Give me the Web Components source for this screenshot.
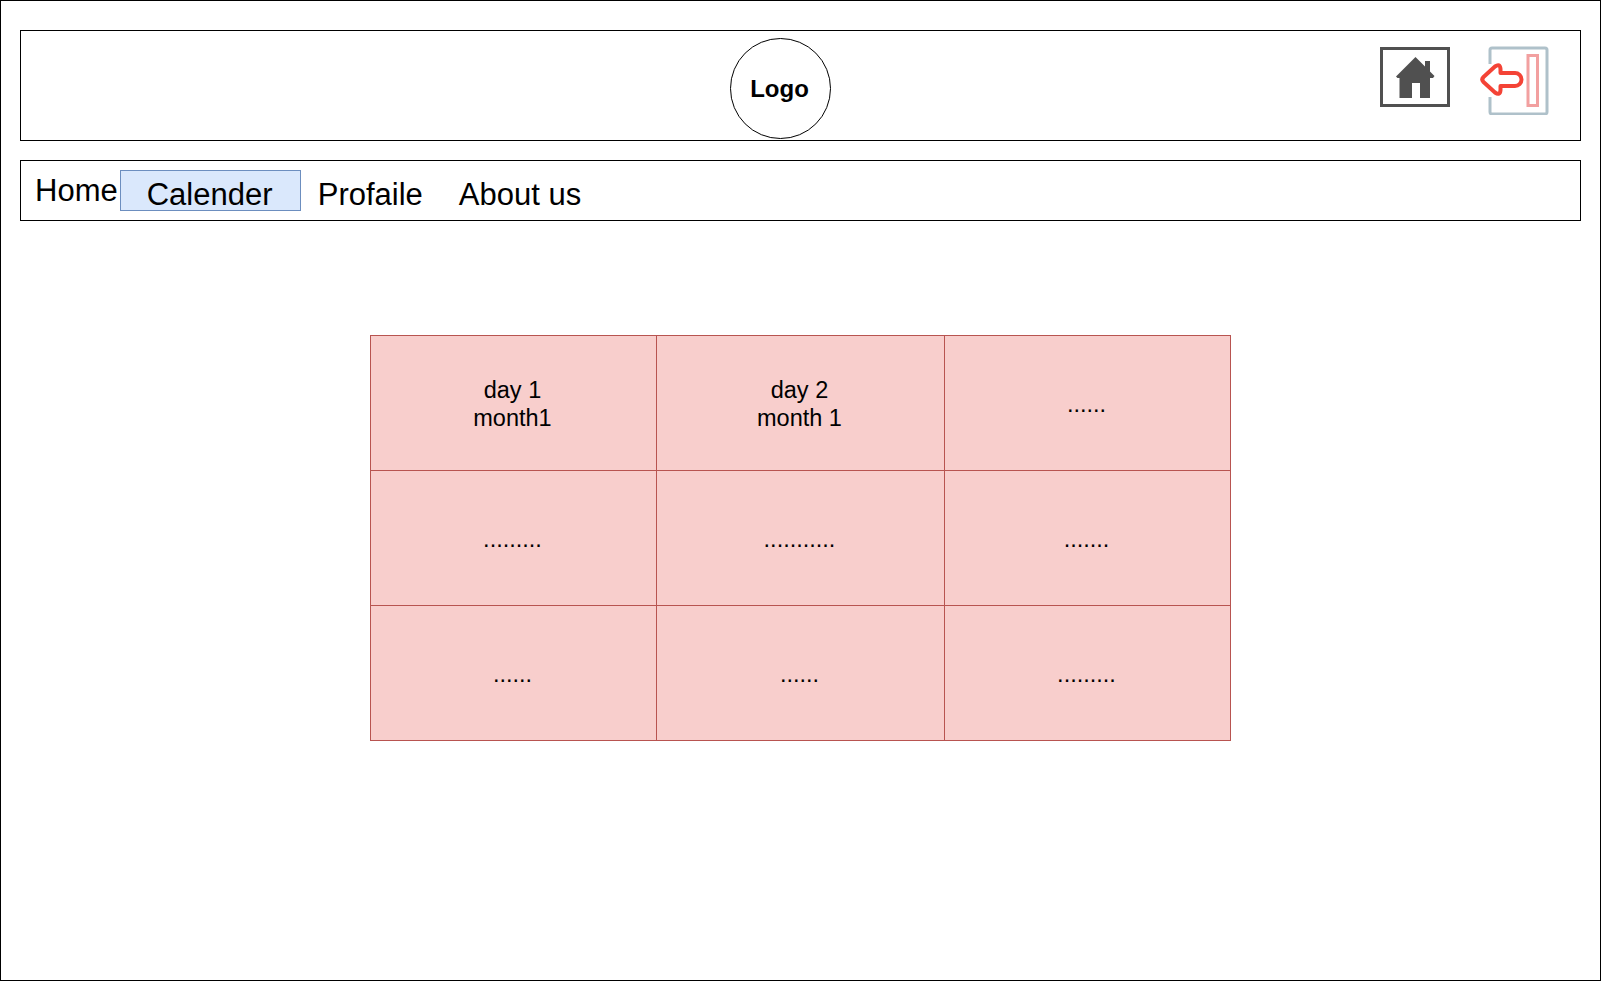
<!DOCTYPE html>
<html>
<head>
<meta charset="utf-8">
<title>Calender</title>
<style>
  html, body { margin: 0; padding: 0; background: #fff; }
</style>
</head>
<body>
<wire-page>
  <wire-header>
    <wire-logo>Logo</wire-logo>
    <home-icon slot="actions"></home-icon>
    <exit-icon slot="actions"></exit-icon>
  </wire-header>
  <wire-nav>
    <nav-item class="first">Home</nav-item>
    <nav-item active>Calender</nav-item>
    <nav-item>Profaile</nav-item>
    <nav-item>About us</nav-item>
  </wire-nav>
  <day-grid>
    <day-cell>day 1<br>month1</day-cell>
    <day-cell>day 2<br>month 1</day-cell>
    <day-cell>......</day-cell>
    <day-cell>.........</day-cell>
    <day-cell>...........</day-cell>
    <day-cell>.......</day-cell>
    <day-cell>......</day-cell>
    <day-cell>......</day-cell>
    <day-cell>.........</day-cell>
  </day-grid>
</wire-page>
<script>
// small helper, every element is just a template + open shadow root
function makeElement(name, html) {
  const template = document.createElement('template');
  template.innerHTML = html;
  customElements.define(name, class extends HTMLElement {
    constructor() {
      super();
      this.attachShadow({ mode: 'open' });
      this.shadowRoot.appendChild(template.content.cloneNode(true));
    }
  });
}

// PAGE
makeElement('wire-page', `
  <style>
    :host {
      display: flex;
      flex-direction: column;
      box-sizing: border-box;
      width: 1601px;
      height: 981px;
      padding: 29px 19px 0 19px;
      border: 1px solid #000;
      background: #fff;
      color: #000;
      font-family: "Liberation Sans", Arial, sans-serif;
    }
  </style>
  <slot></slot>
`);

// HEADER
makeElement('wire-header', `
  <style>
    :host {
      display: flex;
      box-sizing: border-box;
      height: 111px;
      padding: 7px 25px 0 709px;
      border: 1px solid #000;
    }
    .actions {
      display: flex;
      gap: 25px;
      margin-left: auto;
      padding-top: 9px;
    }
  </style>
  <slot></slot>
  <div class="actions"><slot name="actions"></slot></div>
`);

// LOGO
makeElement('wire-logo', `
  <style>
    :host {
      display: flex;
      align-items: center;
      justify-content: center;
      box-sizing: border-box;
      width: 101px;
      height: 101px;
      padding: 1px 2px 0 0;
      border: 1px solid #000;
      border-radius: 50%;
      font-size: 24px;
      font-weight: bold;
    }
  </style>
  <slot></slot>
`);

// HOME ICON
makeElement('home-icon', `
  <style>
    :host { display: block; width: 70px; height: 60px; }
    svg { display: block; }
  </style>
  <svg width="70" height="60" viewBox="0 0 70 60">
    <rect x="1.5" y="1.5" width="67" height="57" fill="#fff" stroke="#505050" stroke-width="3"/>
    <path fill="#505050" d="M35.5 10 L45 19.5 V14 H50 V24.5 L54.5 29 L53 31 H50 V51 H40 V36 H32 V51 H19.5 V31 H17.5 L16 29.5 Z"/>
  </svg>
`);

// EXIT ICON
makeElement('exit-icon', `
  <style>
    :host { display: block; width: 80px; height: 75px; margin-top: -7px; }
    svg { display: block; }
  </style>
  <svg width="80" height="75" viewBox="0 0 80 75" fill="none">
    <path stroke="#afc1ca" stroke-width="3" d="M15 24 V10 Q15 8 17 8 H70 Q72 8 72 10 V72 Q72 74 70 74 H17 Q15 74 15 72 V57"/>
    <rect x="53" y="15.5" width="9.5" height="50" stroke="#f2a0a0" stroke-width="3"/>
    <path stroke="#f44336" stroke-width="4" stroke-linejoin="round" d="M8.5 37 L20 26.5 Q25 23 25.5 29 V33 H40 A6.5 6.5 0 0 1 40 46 H25.5 V50 Q25 56 20 52.5 L8.5 42 Q6 39.5 8.5 37 Z"/>
  </svg>
`);

// NAV
makeElement('wire-nav', `
  <style>
    :host {
      display: flex;
      box-sizing: border-box;
      height: 61px;
      margin-top: 19px;
      padding: 9px 0 0 14px;
      border: 1px solid #000;
    }
  </style>
  <slot></slot>
`);

makeElement('nav-item', `
  <style>
    :host {
      display: block;
      box-sizing: border-box;
      height: 41px;
      margin-left: 17px;
      margin-right: 19px;
      font-size: 31px;
      line-height: 49px;
    }
    :host(.first) { margin: -4px 2px 0 0; }
    :host([active]) {
      width: 181px;
      margin: 0;
      padding-left: 26px;
      border: 1px solid #6c8ebf;
      background: #dae8fc;
      line-height: 48px;
      overflow: hidden;
    }
  </style>
  <slot></slot>
`);

// CALENDER GRID
makeElement('day-grid', `
  <style>
    :host {
      display: grid;
      grid-template-columns: 285px 287px 285px;
      grid-template-rows: repeat(3, 1fr);
      gap: 1px;
      box-sizing: border-box;
      width: 861px;
      height: 406px;
      margin: 114px 0 0 350px;
      padding: 1px;
      background: #b85450;
    }
  </style>
  <slot></slot>
`);

makeElement('day-cell', `
  <style>
    :host {
      display: flex;
      align-items: center;
      justify-content: center;
      padding: 1px 2px 0 0;
      box-sizing: border-box;
      background: #f8cecc;
      font-size: 23.5px;
      line-height: 28px;
      text-align: center;
    }
  </style>
  <div><slot></slot></div>
`);
</script>
</body>
</html>
